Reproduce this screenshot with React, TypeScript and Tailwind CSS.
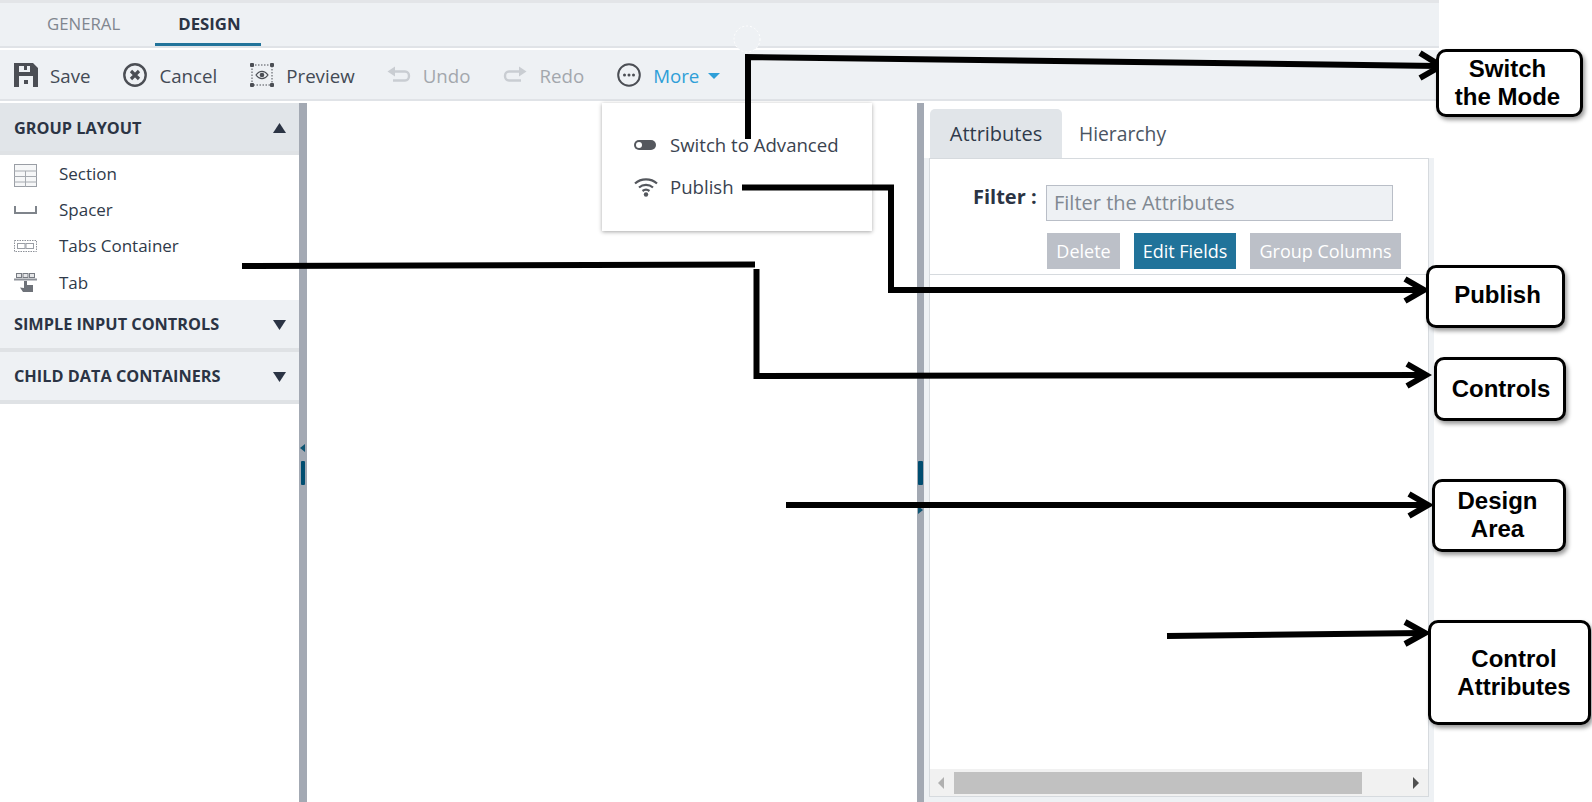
import React from 'react';

const SaveIcon = () => (
  <svg width="24" height="24" viewBox="0 0 24 24" className="shrink-0">
    <path
      fillRule="evenodd"
      fill="#4b4e54"
      d="M0 0H19L24 5V24H0ZM5 3V9H16V3H13V7H10V3ZM5 13V24H19V13ZM10 17H14V21H10Z"
    />
  </svg>
);

const CancelIcon = () => (
  <svg width="24" height="24" viewBox="0 0 24 24" className="shrink-0">
    <circle cx="12" cy="12" r="10.7" fill="none" stroke="#4b4e54" strokeWidth="2.4" />
    <path d="M8 8L16 16M16 8L8 16" stroke="#4b4e54" strokeWidth="3.2" />
  </svg>
);

const PreviewIcon = () => (
  <svg width="24" height="24" viewBox="0 0 24 24" className="shrink-0">
    <rect x="2" y="2" width="20" height="20" fill="none" stroke="#4b4e54" strokeWidth="1" strokeDasharray="1.5 1.5" />
    <rect x="0" y="0" width="4" height="4" rx="1" fill="#4b4e54" />
    <rect x="20" y="0" width="4" height="4" rx="1" fill="#4b4e54" />
    <rect x="0" y="20" width="4" height="4" rx="1" fill="#4b4e54" />
    <rect x="20" y="20" width="4" height="4" rx="1" fill="#4b4e54" />
    <path d="M6 12C8 9.200 10 8.300 12 8.300S16 9.200 18 12C16 14.800 14 15.700 12 15.700S8 14.800 6 12Z" fill="none" stroke="#4b4e54" strokeWidth="1.200" />
    <circle cx="12" cy="12" r="2.300" fill="#4b4e54" />
  </svg>
);

const UndoIcon = () => (
  <svg width="24" height="18" viewBox="0 0 24 18" className="shrink-0">
    <path d="M8 5.500H18C20.500 5.500 22 7.500 22 10S20.500 14.500 18 14.500H6" fill="none" stroke="#c9cdd2" strokeWidth="2.400" />
    <path d="M8 0.500L0.500 5.500L8 10.500Z" fill="#c9cdd2" />
  </svg>
);

const RedoIcon = () => (
  <svg width="24" height="18" viewBox="0 0 24 18" className="shrink-0">
    <path d="M16 5.500H6C3.500 5.500 2 7.500 2 10S3.500 14.500 6 14.500H18" fill="none" stroke="#c9cdd2" strokeWidth="2.400" />
    <path d="M16 0.500L23.500 5.500L16 10.500Z" fill="#c9cdd2" />
  </svg>
);

const MoreIcon = () => (
  <svg width="24" height="24" viewBox="0 0 24 24" className="shrink-0">
    <circle cx="12" cy="12" r="10.800" fill="none" stroke="#4b4e54" strokeWidth="2" />
    <circle cx="7.500" cy="12" r="1.500" fill="#4b4e54" />
    <circle cx="12" cy="12" r="1.500" fill="#4b4e54" />
    <circle cx="16.500" cy="12" r="1.500" fill="#4b4e54" />
  </svg>
);

const ToggleIcon = () => (
  <svg width="22" height="10" viewBox="0 0 22 10" className="shrink-0">
    <rect x="0" y="0" width="22" height="10" rx="5" fill="#54575d" />
    <circle cx="5" cy="5" r="3" fill="#ffffff" />
  </svg>
);

const WifiIcon = () => (
  <svg width="24" height="20" viewBox="0 0 24 20" className="shrink-0">
    <path d="M1 6.500C7 1 17 1 23 6.500" fill="none" stroke="#54575d" strokeWidth="2.200" />
    <path d="M5 10.500C9 7 15 7 19 10.500" fill="none" stroke="#54575d" strokeWidth="2.200" />
    <path d="M8.500 14C10.500 12.500 13.500 12.500 15.500 14" fill="none" stroke="#54575d" strokeWidth="2.200" />
    <circle cx="12" cy="17.500" r="2.200" fill="#54575d" />
  </svg>
);

const SectionIcon = () => (
  <svg width="23" height="23" viewBox="0 0 23 23" className="mt-[3px] shrink-0">
    <rect x="0.500" y="0.500" width="22" height="22" fill="#f6f7f8" stroke="#9a9ea5" />
    <path d="M0 7H23M0 12.500H23M0 18H23M11.500 7V23" stroke="#a6aab0" strokeWidth="1" fill="none" />
  </svg>
);

const SpacerIcon = () => (
  <svg width="23" height="8" viewBox="0 0 23 8" className="shrink-0">
    <path d="M1 0V7H22V0" fill="none" stroke="#7f848b" strokeWidth="2" />
  </svg>
);

const TabsContainerIcon = () => (
  <svg width="23" height="12" viewBox="0 0 23 12" className="shrink-0">
    <rect x="0.500" y="0.500" width="22" height="11" fill="none" stroke="#8d9198" strokeDasharray="1.500 1" />
    <rect x="3.500" y="3.500" width="7.500" height="5" fill="none" stroke="#9a9ea5" />
    <rect x="12" y="3.500" width="7.500" height="5" fill="none" stroke="#9a9ea5" />
  </svg>
);

const TabIcon = () => (
  <svg width="23" height="19" viewBox="0 0 23 19" className="shrink-0">
    <rect x="2.500" y="0.500" width="5" height="4" fill="#e6e7e9" stroke="#777b82" />
    <rect x="9" y="0.500" width="5" height="4" fill="#e6e7e9" stroke="#777b82" />
    <rect x="15.500" y="0.500" width="5" height="4" fill="#e6e7e9" stroke="#777b82" />
    <path d="M0 6.500H23" stroke="#8d9198" strokeWidth="2" />
    <path d="M10 8H13V12H19V19H9L6 14.500L10 15Z" fill="#6e7279" />
  </svg>
);

const Caret = ({ up = false }: { up?: boolean }) => (
  <svg width="13" height="10" viewBox="0 0 13 10" className="shrink-0">
    <path d={up ? 'M6.500 0L13 10H0Z' : 'M0 0H13L6.500 10Z'} fill="#2b3444" />
  </svg>
);

const ToolbarButton = ({
  icon,
  label,
  muted = false,
  className = '',
}: {
  icon: React.ReactNode;
  label: string;
  muted?: boolean;
  className?: string;
}) => (
  <div className={`flex items-center gap-3 ${className}`}>
    <div className="flex w-6 justify-center">{icon}</div>
    <span className={`mt-[2px] ${muted ? 'text-[#a3a7ad]' : 'text-[#434a54]'}`}>{label}</span>
  </div>
);

const PaletteItem = ({ icon, label, className = '' }: { icon: React.ReactNode; label: string; className?: string }) => (
  <div className={`flex items-center pl-[14px] pt-[1px] text-[17px] text-[#2f3a4a] ${className}`}>
    <div className="flex w-[45px] shrink-0">{icon}</div>
    <span>{label}</span>
  </div>
);

const GroupHeader = ({ label, open = false }: { label: string; open?: boolean }) => (
  <div
    className={`flex h-[52px] items-center justify-between border-b-4 border-[#dfe2e5] pl-[14px] pr-[13px] text-[16.300px] font-bold text-[#2b3444] ${
      open ? 'bg-[#e1e5e9] pt-[2px]' : 'bg-[#eef1f4] pt-[1px]'
    }`}
  >
    <span>{label}</span>
    <Caret up={open} />
  </div>
);

// annotation arrows sit on top of the whole screenshot
const Annotations = () => (
  <svg width="1592" height="802" viewBox="0 0 1592 802" className="pointer-events-none absolute left-0 top-0">
    <circle cx="747" cy="39" r="13" fill="#eef1f4" stroke="#ffffff" strokeDasharray="2 2" />
    <g fill="none" stroke="#000000" strokeWidth="6" strokeLinejoin="miter">
      <path d="M748 139V57L1438 66" />
      <path d="M1420 53L1441 66L1420 78" />
      <path d="M742 187.500H891V290H1422" />
      <path d="M1405 279L1424 290L1405 301" />
      <path d="M242 266L755 264.500M756.500 269V376L1424 375" />
      <path d="M1407 364L1426 375L1407 386" />
      <path d="M786 505H1426" />
      <path d="M1409 494L1428 505L1409 516" />
      <path d="M1167 636L1423 633" />
      <path d="M1405 622L1425 633L1405 644" />
    </g>
  </svg>
);

const Callout = ({ className, children }: { className: string; children: React.ReactNode }) => (
  <div
    className={`absolute flex items-center justify-center rounded-[10px] border-[3.500px] border-black bg-white text-center font-['Liberation_Sans',sans-serif] text-[24px] font-bold leading-[28px] text-black shadow-[2px_3px_4px_rgba(0,0,0,0.4)] ${className}`}
  >
    {children}
  </div>
);

export default function App() {
  return (
    <div className="relative h-[802px] w-[1592px] overflow-hidden bg-white font-['Open_Sans',sans-serif]">
      <div className="w-[1439px]">
        <div className="flex h-[48px] items-start border-b-2 border-[#e0e3e7] border-t-[3px] border-t-[#e3e5e8] bg-[#eef1f4] pl-[47px] text-[16.800px]">
          <div className="pt-[8px] text-[#80868f]">GENERAL</div>
          <div className="relative ml-[58px] pt-[8px] font-bold text-[#2b3444]">
            DESIGN
            <div className="absolute -left-[23px] top-[40px] h-[3px] w-[106px] bg-[#21739a]" />
          </div>
        </div>
        <div className="mt-[2px] flex h-[51px] items-center border-b-2 border-[#e0e3e7] bg-[#eef1f4] pl-[14px] pt-[2px] text-[18.700px]">
          <ToolbarButton icon={<SaveIcon />} label="Save" />
          <ToolbarButton className="ml-[33px]" icon={<CancelIcon />} label="Cancel" />
          <ToolbarButton className="ml-[33px]" icon={<PreviewIcon />} label="Preview" />
          <ToolbarButton className="ml-[32px]" icon={<UndoIcon />} label="Undo" muted />
          <ToolbarButton className="ml-[33px]" icon={<RedoIcon />} label="Redo" muted />
          <div className="ml-[33px] flex items-center gap-3">
            <MoreIcon />
            <span className="mt-[2px] text-[#2e9fd8]">More</span>
            <svg width="12" height="6" viewBox="0 0 12 6" className="-ml-[3px] mt-[2px]">
              <path d="M0 0H12L6 6Z" fill="#2e9fd8" />
            </svg>
          </div>
        </div>

        <div className="mt-[2px] flex h-[699px]">
          <aside className="w-[299px] shrink-0">
            <GroupHeader label="GROUP LAYOUT" open />
            <div className="flex h-[145px] flex-col">
              <PaletteItem className="h-[36px]" icon={<SectionIcon />} label="Section" />
              <PaletteItem className="h-[36px]" icon={<SpacerIcon />} label="Spacer" />
              <PaletteItem className="h-[36px]" icon={<TabsContainerIcon />} label="Tabs Container" />
              <PaletteItem className="h-[37px] pt-[2px]" icon={<TabIcon />} label="Tab" />
            </div>
            <GroupHeader label="SIMPLE INPUT CONTROLS" />
            <GroupHeader label="CHILD DATA CONTAINERS" />
          </aside>

          <div className="relative w-[8px] shrink-0 bg-[#a3a9b3]">
            <div className="absolute left-[1px] top-[341px] h-0 w-0 border-y-[4px] border-r-[5px] border-y-transparent border-r-[#0f5573]" />
            <div className="absolute left-[2px] top-[358px] h-[24px] w-[4px] rounded-[1px] bg-[#004d70]" />
          </div>

          <main className="relative w-[610px] shrink-0">
            <div className="absolute left-[295px] top-0 flex h-[128px] w-[270px] flex-col bg-white pl-[32px] pt-[21px] text-[18.600px] text-[#3a4350] shadow-[0_1px_4px_rgba(0,0,0,0.35)]">
              <div className="flex h-[42px] items-center gap-[14px]">
                <ToggleIcon />
                <span>Switch to Advanced</span>
              </div>
              <div className="flex h-[41px] items-center gap-[12px]">
                <WifiIcon />
                <span>Publish</span>
              </div>
            </div>
          </main>

          <div className="relative w-[7px] shrink-0 bg-[#a3a9b3]">
            <div className="absolute left-[1px] top-[358px] h-[24px] w-[5px] rounded-[1px] bg-[#004d70]" />
            <div className="absolute left-[1px] top-[403px] h-0 w-0 border-y-[4px] border-l-[5px] border-y-transparent border-l-[#0f5573]" />
          </div>

          <section className="flex w-[515px] shrink-0 flex-col">
            <div className="flex h-[55px] shrink-0 items-end pl-[6px] pr-[5px]">
              <div className="flex h-[49px] w-[132px] items-center justify-center rounded-t-[5px] bg-[#e1e5e9] pt-[1px] text-[20px] text-[#2f3a4a]">
                Attributes
              </div>
              <div className="flex h-[49px] w-[121px] items-center justify-center pt-[1px] text-[19.300px] text-[#4b5563]">Hierarchy</div>
            </div>
            <div className="flex min-h-0 w-[510px] flex-1 flex-col bg-[#eef1f4] pb-[5px] pl-[5px] pr-[5px]">
              <div className="flex min-h-0 flex-1 flex-col border border-[#d6dade] bg-white">
                <div className="h-[116px] shrink-0 border-b border-[#d6dade]">
                  <div className="flex items-start pl-[43px] pt-[26px]">
                    <span className="w-[73px] text-[20px] font-bold leading-[24px] text-[#2b3444]">Filter :</span>
                    <div className="flex h-[36px] w-[347px] items-center border border-[#b9bec7] bg-[#eef1f4] pl-[7px] pb-[1px] text-[20px] leading-[24px] text-[#808891]">
                      Filter the Attributes
                    </div>
                  </div>
                  <div className="ml-[117px] mt-[12px] flex gap-[14px] text-[18px] text-white">
                    <div className="flex h-[36px] w-[73px] items-center justify-center bg-[#bcc0c8]">Delete</div>
                    <div className="flex h-[36px] w-[102px] items-center justify-center bg-[#21739a]">Edit Fields</div>
                    <div className="flex h-[36px] w-[151px] items-center justify-center bg-[#bcc0c8]">Group Columns</div>
                  </div>
                </div>
                <div className="min-h-0 flex-1" />
                <div className="flex h-[27px] shrink-0 items-center bg-[#f1f1f1] pt-[1px]">
                  <div className="ml-[8px] h-0 w-0 border-y-[6px] border-r-[6px] border-y-transparent border-r-[#b0b0b0]" />
                  <div className="ml-[10px] h-[22px] w-[408px] bg-[#c1c1c1]" />
                  <div className="ml-[51px] h-0 w-0 border-y-[6px] border-l-[6px] border-y-transparent border-l-[#505050]" />
                </div>
              </div>
            </div>
          </section>
        </div>
      </div>

      <Annotations />

      <Callout className="left-[1436px] top-[49px] h-[68px] w-[147px]">
        <span className="pr-[4px]">
          Switch
          <br />
          the Mode
        </span>
      </Callout>
      <Callout className="left-[1426px] top-[265px] h-[63px] w-[139px]">
        <span className="pl-[4px] pb-[3px]">Publish</span>
      </Callout>
      <Callout className="left-[1434px] top-[357px] h-[64px] w-[132px]">
        <span className="pl-[2px]">Controls</span>
      </Callout>
      <Callout className="left-[1432px] top-[479px] h-[73px] w-[134px]">
        <span className="pr-[3px] pb-[2px]">
          Design
          <br />
          Area
        </span>
      </Callout>
      <Callout className="left-[1428px] top-[620px] h-[105px] w-[163px]">
        <span className="pl-[9px]">
          Control
          <br />
          Attributes
        </span>
      </Callout>
    </div>
  );
}
